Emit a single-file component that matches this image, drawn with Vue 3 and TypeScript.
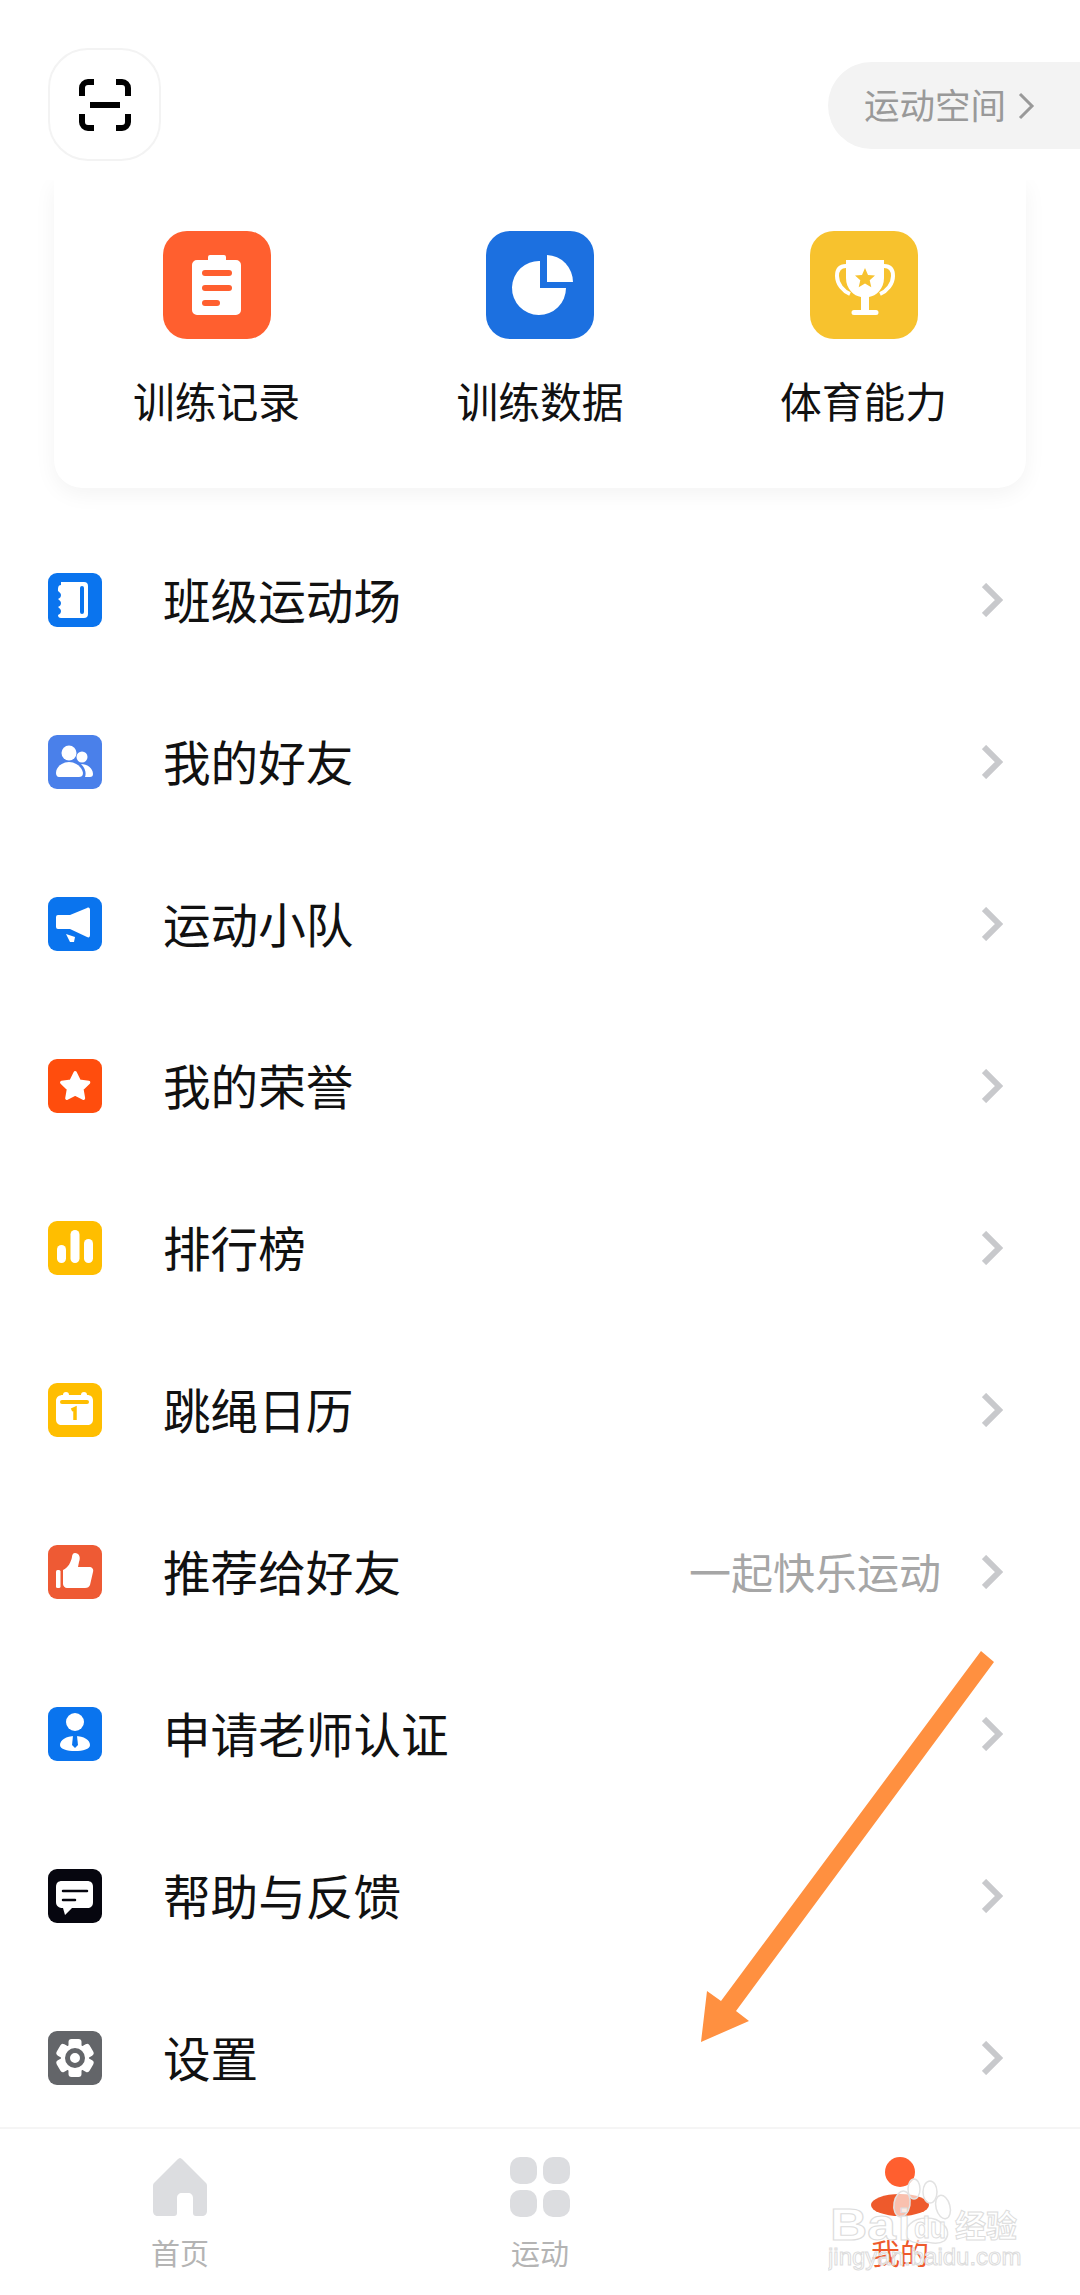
<script setup lang="ts">
const tools = [
  { name: '训练记录', icon: 'clip', color: '#ff5f2f' },
  { name: '训练数据', icon: 'pie', color: '#1c70e0' },
  { name: '体育能力', icon: 'cup', color: '#f7c22e' },
]

const rows = [
  { name: '班级运动场', icon: 'book', color: '#0a74ee', hint: '' },
  { name: '我的好友', icon: 'friends', color: '#4a80ea', hint: '' },
  { name: '运动小队', icon: 'horn', color: '#0a74ee', hint: '' },
  { name: '我的荣誉', icon: 'star', color: '#ff4d0d', hint: '' },
  { name: '排行榜', icon: 'bars', color: '#ffbe00', hint: '' },
  { name: '跳绳日历', icon: 'cal', color: '#ffbe00', hint: '' },
  { name: '推荐给好友', icon: 'thumb', color: '#ee5a34', hint: '一起快乐运动' },
  { name: '申请老师认证', icon: 'teacher', color: '#0a74ee', hint: '' },
  { name: '帮助与反馈', icon: 'chat', color: '#06060f', hint: '' },
  { name: '设置', icon: 'gear', color: '#636569', hint: '' },
]

const teeth = [0, 60, 120]
</script>

<template>
  <div class="page">
    <header class="top">
      <button class="scan">
        <svg width="52" height="52" viewBox="0 0 52 52" fill="none" stroke="#000" stroke-width="6">
          <path d="M3 17V9a6 6 0 0 1 6-6h6M37 3h6a6 6 0 0 1 6 6v8M3 35v8a6 6 0 0 0 6 6h6M37 49h6a6 6 0 0 0 6-6v-8" />
          <path d="M11 26h30" />
        </svg>
      </button>
      <div class="space">
        <span>运动空间</span>
        <svg width="18" height="28" viewBox="0 0 18 28" fill="none" stroke="#999" stroke-width="3">
          <path d="M3 2l12 12L3 26" />
        </svg>
      </div>
    </header>

    <section class="card">
      <div v-for="t in tools" :key="t.name" class="tool">
        <svg class="tool-icon" width="108" height="108" viewBox="0 0 108 108">
          <rect width="108" height="108" rx="24" :fill="t.color" />
          <g v-if="t.icon === 'clip'">
            <path d="M45 29v-3a2 2 0 0 1 2-2h14a2 2 0 0 1 2 2v3h10a5 5 0 0 1 5 5v45a5 5 0 0 1-5 5H34a5 5 0 0 1-5-5V34a5 5 0 0 1 5-5z" fill="#fff" />
            <rect x="39" y="39" width="30" height="6" rx="3" :fill="t.color" />
            <rect x="39" y="54" width="30" height="6" rx="3" :fill="t.color" />
            <rect x="39" y="69" width="18" height="6" rx="3" :fill="t.color" />
          </g>
          <g v-else-if="t.icon === 'pie'" fill="#fff">
            <path d="M54 30v27h26a27 27 0 1 1-26-27z" />
            <path d="M61 24a27 27 0 0 1 26 27H61z" />
          </g>
          <g v-else>
            <path d="M36 29h38v18c0 11-8 18-15 19v13h7a2.5 2.5 0 0 1 0 5H44a2.5 2.5 0 0 1 0-5h7V66c-7-1-15-8-15-19z" fill="#fff" />
            <path d="M36 35c-7 0-9 4-9 10 0 8 6 15 13 18M74 35c7 0 9 4 9 10 0 8-6 15-13 18" fill="none" stroke="#fff" stroke-width="4" />
            <path d="M55 37l3 7 7 .6-5.3 4.6 1.6 7-6.300-3.700-6.300 3.700 1.600-7L45 44.600l7-.6z" :fill="t.color" />
          </g>
        </svg>
        <span>{{ t.name }}</span>
      </div>
    </section>

    <ul class="list">
      <li v-for="row in rows" :key="row.name" class="row">
        <svg class="row-icon" width="54" height="54" viewBox="0 0 54 54">
          <rect width="54" height="54" rx="9" :fill="row.color" />
          <g v-if="row.icon === 'book'">
            <path d="M13 9h23a4 4 0 0 1 4 4v28a4 4 0 0 1-4 4H13a3 3 0 0 1-3-3c2-1 3-2 3-4s-2-3-3-4c2-1 3-2 3-4s-2-3-3-4c2-1 3-2 3-4s-2-3-3-4c0-3 0-6 3-6z" fill="#fff" />
            <rect x="32" y="13" width="4" height="28" rx="2" :fill="row.color" />
          </g>
          <g v-else-if="row.icon === 'friends'" fill="#fff">
            <circle cx="21" cy="18" r="7.500" />
            <path d="M8 38c0-6 6-11 13-11s13 5 14 11c0 3-2 4-4 4H11c-2 0-3-2-3-4z" />
            <circle cx="34" cy="22" r="5.500" />
            <path d="M33 29c6 0 12 4 12 10 0 2-1 3-3 3h-5c2-5-1-10-4-13z" />
          </g>
          <g v-else-if="row.icon === 'horn'" fill="#fff">
            <path d="M10 18h12l17-7c2-1 3 0 3 2v25c0 2-1 3-3 2l-17-8H10a2 2 0 0 1-2-2V20a2 2 0 0 1 2-2z" />
            <path d="M18 37l9 3-1 5-4 0z" />
          </g>
          <g v-else-if="row.icon === 'star'">
            <path d="M27 11l5 10 11 1.600-8 7.800 1.900 11L27 36.200 17.100 41.400 19 30.400l-8-7.800L22 21z" fill="#fff" stroke="#fff" stroke-width="4" stroke-linejoin="round" transform="translate(4.500 4.500) scale(.84)" />
          </g>
          <g v-else-if="row.icon === 'bars'" fill="#fff">
            <rect x="9" y="24" width="9" height="18" rx="4.500" />
            <rect x="22.500" y="9" width="9" height="33" rx="4.500" />
            <rect x="36" y="18" width="9" height="24" rx="4.500" />
          </g>
          <g v-else-if="row.icon === 'cal'">
            <path d="M15 12a3 3 0 0 1 6 0h12a3 3 0 0 1 6 0c4 0 6 2 6 6v18c0 4-2 6-6 6H14c-4 0-6-2-6-6V18c0-4 3-6 7-6z" fill="#fff" />
            <rect x="12" y="17" width="29" height="4" rx="2" :fill="row.color" />
            <path d="M23.500 27l3.500-1.500V37" fill="none" :stroke="row.color" stroke-width="3.500" />
          </g>
          <g v-else-if="row.icon === 'thumb'" fill="#fff">
            <rect x="8" y="25" width="4.500" height="18" rx="1.500" />
            <path d="M15 25c5-2 8-8 9-13 0-2 1-4 3-4 4 0 6 4 4 9l-1 5h11c3 0 5 2 4 5l-3 13c-1 2-2 3-5 3H19c-2 0-4-2-4-4z" />
          </g>
          <g v-else-if="row.icon === 'teacher'">
            <circle cx="27" cy="15" r="9" fill="#fff" />
            <path d="M12 38c0-5 6-9 15-9s15 4 15 9c0 4-7 6-15 6s-15-2-15-6z" fill="#fff" />
            <path d="M25 29h4l1 9-3 3-3-3z" :fill="row.color" />
          </g>
          <g v-else-if="row.icon === 'chat'">
            <path d="M14 12h25c4 0 6 2 6 6v15c0 4-2 6-6 6H24l-7 7-2-7c-4 0-7-2-7-6V18c0-4 2-6 6-6z" fill="#fff" />
            <path d="M15 22h17M33 22h6M15 31h12" :stroke="row.color" stroke-width="2.500" stroke-linecap="round" fill="none" />
          </g>
          <g v-else>
            <rect v-for="a in teeth" :key="a" x="20.500" y="8" width="13" height="38" rx="3" fill="#fff" :transform="`rotate(${a} 27 27)`" />
            <circle cx="27" cy="27" r="14" fill="#fff" />
            <circle cx="27" cy="27" r="7.500" fill="none" :stroke="row.color" stroke-width="5" />
          </g>
        </svg>
        <span class="row-name">{{ row.name }}</span>
        <span v-if="row.hint" class="row-hint">{{ row.hint }}</span>
        <svg class="chev" width="21" height="34" viewBox="0 0 21 34" fill="none" stroke="#c8c9cc" stroke-width="6">
          <path d="M2 2l15 15L2 32" />
        </svg>
      </li>
    </ul>

    <nav class="tabs">
      <div class="tab">
        <svg width="54" height="60" viewBox="0 0 54 60">
          <path d="M27 1c1 0 2 1 3 2l23 23c1 1 1 2 1 4v24c0 3-2 5-5 5h-6c-2 0-3-1-3-3V41c0-3-2-5-5-5h-6c-3 0-5 2-5 5v15c0 2-1 3-3 3H5c-3 0-5-2-5-5V30c0-2 0-3 1-4L24 3c1-1 2-2 3-2z" fill="#dcdde0" />
        </svg>
        <span>首页</span>
      </div>
      <div class="tab">
        <div class="grid">
          <i></i><i></i><i></i><i></i>
        </div>
        <span>运动</span>
      </div>
      <div class="tab active">
        <svg width="60" height="60" viewBox="0 0 60 60">
          <circle cx="30" cy="15" r="15" fill="#ff5f2f" />
          <ellipse cx="30" cy="48" rx="29" ry="11" fill="#ee5a2c" />
        </svg>
        <span>我的</span>
      </div>
    </nav>

    <svg class="arrow" width="1080" height="2295" viewBox="0 0 1080 2295">
      <path d="M981 1651L994 1662 736 2011 749 2021 701 2042 707 1991 721 2001z" fill="#ff9040" />
    </svg>

    <svg class="mark" width="200" height="110" viewBox="0 0 200 110">
      <g class="paw">
        <ellipse cx="74" cy="34" rx="8" ry="13" transform="rotate(10 74 34)" />
        <ellipse cx="86" cy="19" rx="6" ry="10" />
        <ellipse cx="102" cy="22" rx="7" ry="11" />
        <ellipse cx="115" cy="37" rx="7" ry="12" transform="rotate(-15 115 37)" />
        <path d="M82 54c8-8 26-8 32 0 6 3 8 12 2 17-6 4-12 2-17 1-6 1-13 2-18-2-5-5-3-13 1-16z" />
      </g>
      <text class="mark-word" x="2" y="70" textLength="66" lengthAdjust="spacingAndGlyphs">Ba</text>
      <text class="mark-word" x="70" y="70">i</text>
      <text class="mark-word small" x="86" y="68" textLength="32" lengthAdjust="spacingAndGlyphs">du</text>
      <text class="mark-cjk" x="127" y="67">经验</text>
      <text class="mark-url" x="0" y="95">jingyan.baidu.com</text>
    </svg>
  </div>
</template>

<style>
body {
  background: #fff;
}
</style>

<style scoped>
.page {
  position: relative;
  width: 1080px;
  height: 2295px;
  display: flex;
  flex-direction: column;
  overflow: hidden;
  background: #fff;
  font-family: "Noto Sans CJK SC", "Noto Sans", sans-serif;
  color: #111;
}

.top {
  position: relative;
  z-index: 1;
  height: 180px;
  flex: none;
  display: flex;
  justify-content: space-between;
  align-items: flex-start;
  padding-top: 48px;
  padding-left: 48px;
  box-sizing: border-box;
  background: #fff;
}

.scan {
  width: 113px;
  height: 113px;
  padding: 0;
  display: flex;
  align-items: center;
  justify-content: center;
  background: #fff;
  border: 2px solid #f3f3f3;
  border-radius: 40px;
}

.space {
  width: 252px;
  height: 87px;
  margin-top: 14px;
  padding-left: 36px;
  box-sizing: border-box;
  display: flex;
  align-items: center;
  gap: 11px;
  background: #f3f3f3;
  border-radius: 44px 0 0 44px;
  color: #999;
  font-size: 35.5px;
}

.space span {
  padding-bottom: 5px;
}

.card {
  flex: none;
  height: 308px;
  margin: 0 54px;
  padding-top: 51px;
  box-sizing: border-box;
  display: flex;
  justify-content: space-between;
  padding-left: 80px;
  padding-right: 80px;
  background: #fff;
  border-radius: 0 0 28px 28px;
  box-shadow: 0 6px 22px rgba(0, 0, 0, 0.05);
}

.tool {
  width: 165px;
  display: flex;
  flex-direction: column;
  align-items: center;
  gap: 31px;
  font-size: 41.8px;
  line-height: 60px;
  white-space: nowrap;
}

.list {
  flex: 1;
  min-height: 0;
  margin: 31px 0 0;
  padding: 0;
  list-style: none;
  overflow: hidden;
}

.row {
  height: 162px;
  display: flex;
  align-items: center;
  padding: 0 77px 0 48px;
}

.row-icon {
  flex: none;
  margin-right: 61px;
}

.row-name {
  flex: 1;
  padding-bottom: 3px;
  font-size: 47.6px;
}

.row-hint {
  margin-right: 41px;
  padding-bottom: 3px;
  color: #a6a6a6;
  font-size: 42px;
}

.chev {
  flex: none;
}

.tabs {
  flex: none;
  height: 168px;
  display: flex;
  background: #fff;
  border-top: 2px solid #f5f5f5;
  box-sizing: border-box;
  padding-top: 28px;
}

.tab {
  flex: 1;
  display: flex;
  flex-direction: column;
  align-items: center;
  gap: 14px;
  color: #b4b4b4;
  font-size: 29px;
  line-height: 42px;
}

.tab.active {
  color: #ee5a2c;
}

.grid {
  width: 60px;
  height: 60px;
  display: grid;
  grid-template-columns: 1fr 1fr;
  gap: 6px;
}

.grid i {
  background: #dcdde0;
  border-radius: 10px;
}

.arrow {
  position: absolute;
  left: 0;
  top: 0;
  pointer-events: none;
}

.mark {
  position: absolute;
  left: 828px;
  top: 2170px;
  pointer-events: none;
}

.paw {
  fill: rgba(255, 255, 255, 0.62);
  stroke: #e2e2e2;
  stroke-width: 1.5;
}

.mark-word,
.mark-url,
.mark-cjk {
  fill: rgba(255, 255, 255, 0.7);
  stroke: #dcdcdc;
  stroke-width: 1;
}

.mark-word {
  font-family: "Liberation Sans", sans-serif;
  font-size: 44px;
  font-weight: 700;
}

.mark-word.small {
  font-size: 30px;
}

.mark-cjk {
  font-family: "Noto Sans CJK SC", sans-serif;
  font-size: 31px;
  font-weight: 700;
}

.mark-url {
  font-family: "Liberation Sans", sans-serif;
  font-size: 24px;
}
</style>
